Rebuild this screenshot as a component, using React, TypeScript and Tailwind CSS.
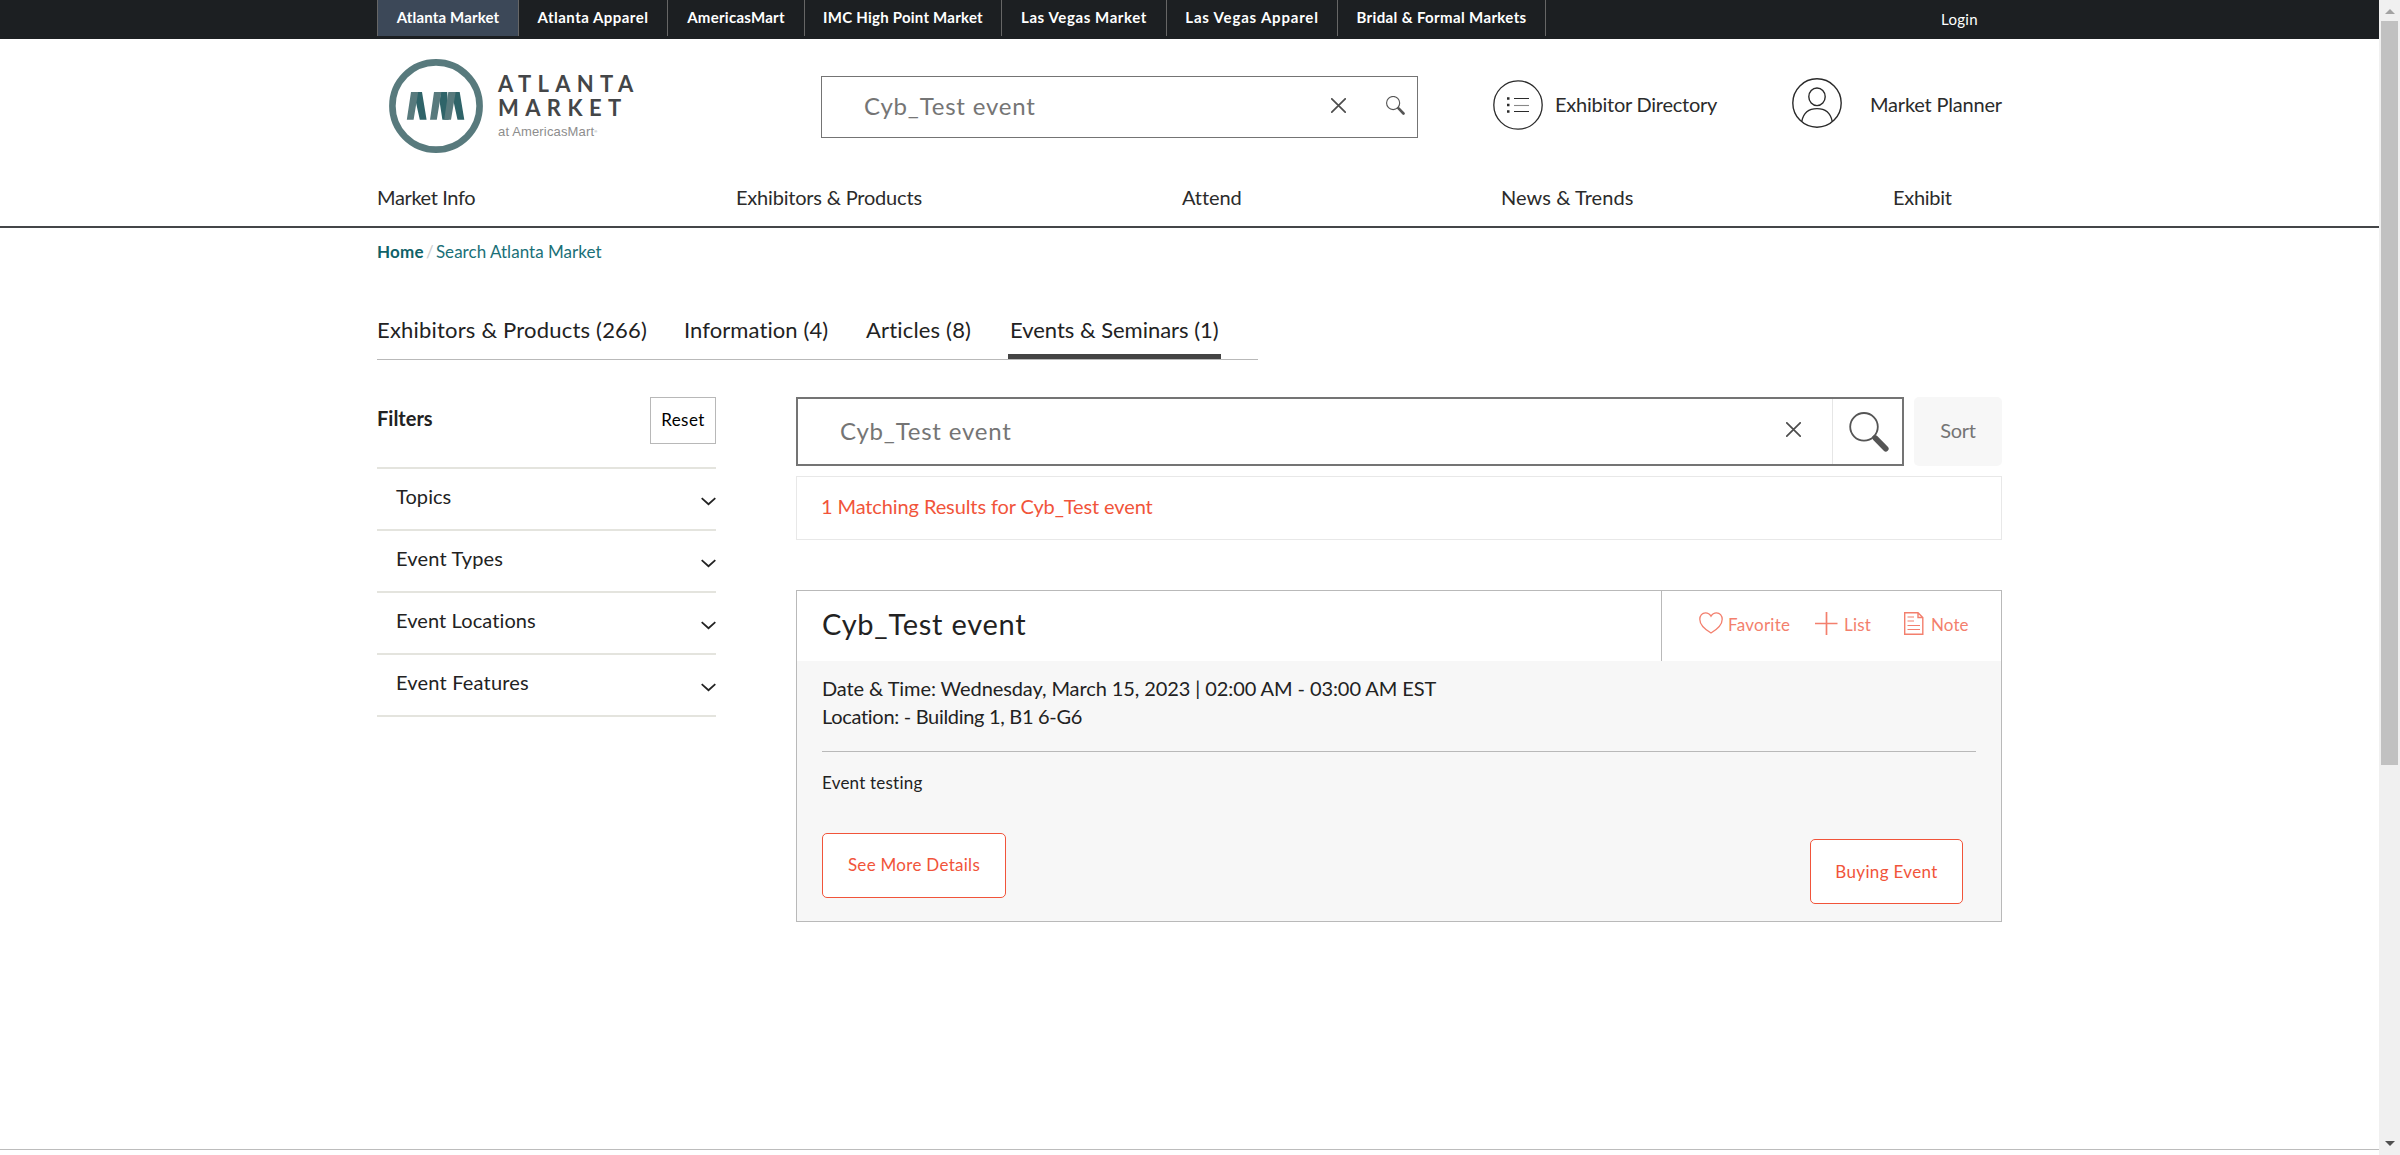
import type { ReactNode } from "react";

const markets = [
  { name: "Atlanta Market", cls: "w-[142px] tracking-[0.16px] bg-[#3c4858] border-l" },
  { name: "Atlanta Apparel", cls: "w-[149px] tracking-[0.47px]" },
  { name: "AmericasMart", cls: "w-[137px] tracking-[0.27px]" },
  { name: "IMC High Point Market", cls: "w-[197px] tracking-[0.24px]" },
  { name: "Las Vegas Market", cls: "w-[165px] tracking-[0.6px]" },
  { name: "Las Vegas Apparel", cls: "w-[171px] tracking-[0.8px]" },
  { name: "Bridal & Formal Markets", cls: "w-[208px] tracking-[0.37px]" },
];

const navItems = [
  { name: "Market Info", cls: "w-[359px] tracking-[-0.37px]" },
  { name: "Exhibitors & Products", cls: "w-[446px] tracking-[-0.2px]" },
  { name: "Attend", cls: "w-[319px] tracking-[-0.09px]" },
  { name: "News & Trends", cls: "w-[392px] tracking-[0.06px]" },
  { name: "Exhibit", cls: "tracking-[-0.28px]" },
];

const filters = [
  { name: "Topics", cls: "tracking-[0.07px]" },
  { name: "Event Types", cls: "tracking-[0.18px]" },
  { name: "Event Locations", cls: "tracking-[0.1px]" },
  { name: "Event Features", cls: "tracking-[0.19px]" },
];

function Close() {
  return (
    <svg width="15" height="15" viewBox="0 0 15 15" stroke="#4d4d4d" strokeWidth="1.7" strokeLinecap="round">
      <path d="M0.8 0.8 14.2 14.2M14.2 0.8 0.8 14.2" />
    </svg>
  );
}

function Magnifier({ size, ring }: { size: number; ring: number }) {
  return (
    <svg width={size} height={size} viewBox="0 0 40 40" fill="none">
      <circle cx="15" cy="14.8" r="13.8" stroke="#555" strokeWidth={ring} />
      <path d="M26.5 26.2 36.8 36.8" stroke="#555" strokeWidth="5.6" strokeLinecap="round" />
      <path d="M24 24 28 28" stroke="#555" strokeWidth="3" />
    </svg>
  );
}

function LogoMark() {
  return (
    <svg width="94" height="94" viewBox="0 0 94 94" className="shrink-0">
      <circle cx="47" cy="47" r="43.6" fill="none" stroke="#587a7d" strokeWidth="6.6" />
      <path fill="#2f6469" d="M27.5 33H33l4.6 27.7h-6.8L26.2 40zM52 33h6.2l1.5 27.7h-6.3L50.5 42zM65.5 33h5.2l4.6 27.7h-6.8L64 40z" />
      <path fill="#587a7d" d="M22 33h7.2l-4.6 27.7h-6.8zM45 33h7.4l-4.6 27.7H41zM59.3 33h7.4L62 60.7h-6.8z" />
    </svg>
  );
}

function Header() {
  return (
    <header>
      <div className="flex h-[39px] bg-[#1c1f22] pl-[377px] text-[15px] text-white">
        <div className="flex h-9">
          {markets.map((m) => (
            <div key={m.name} className={`flex items-center justify-center border-r border-[#666] pb-[2px] font-bold ${m.cls}`}>
              {m.name}
            </div>
          ))}
        </div>
        <div className="ml-[395px] flex h-[38px] items-center tracking-[0.3px]">Login</div>
      </div>
      <div className="border-b-2 border-[#444648] pl-[377px]">
        <div className="flex h-[134px] items-center text-[20px] text-[#2b2b2b]">
          <div className="ml-3 flex w-[432px] items-center">
            <LogoMark />
            <div className="ml-[15px] flex flex-col text-[#444648]">
              <div className="text-[22px] leading-[24px] font-bold tracking-[6.3px]">ATLANTA</div>
              <div className="text-[22px] leading-[24px] font-bold tracking-[6.4px]">MARKET</div>
              <div className="mt-[3px] font-['Liberation_Sans'] text-[13px] leading-[17px] tracking-[0.15px] text-[#8d8d8d]">
                at AmericasMart<span className="align-top text-[4px]">®</span>
              </div>
            </div>
          </div>
          <div className="mt-[2px] flex h-[62px] w-[597px] items-center border border-[#747474] pb-[4px] pl-[42px] text-[#757575]">
            <div className="grow pt-[2px] text-[24px] tracking-[0.8px]">Cyb_Test event</div>
            <Close />
            <div className="ml-10 mr-3 pt-[1px]">
              <Magnifier size={19} ring={2.4} />
            </div>
          </div>
          <div className="ml-[75px] flex w-[299px] items-center gap-[12px]">
            <svg width="50" height="50" viewBox="0 0 50 50" fill="none" stroke="#2b2b2b" className="-mt-[2px]">
              <circle cx="25" cy="25" r="24.2" strokeWidth="1.3" />
              <path d="M21 18.5h15M21 31.5h15" strokeWidth="1.1" />
              <path d="M21 25.5h15" stroke="#888" strokeWidth="1.1" />
              <path d="M14 18.5h2.5M14 25h2.5M14 31.5h2.5" strokeWidth="2.6" />
            </svg>
            <span className="-mt-[4px] tracking-[-0.24px]">Exhibitor Directory</span>
          </div>
          <div className="flex items-center gap-[28px]">
            <svg width="50" height="50" viewBox="0 0 50 50" fill="none" stroke="#2b2b2b" strokeWidth="1.4" className="-mt-[6px]">
              <circle cx="25" cy="25" r="24.2" />
              <ellipse cx="25" cy="18.8" rx="8.2" ry="8.8" />
              <path d="M9.8 43.3C11.5 34.5 17.5 30.6 25 30.6S38.5 34.5 40.2 43.3" />
            </svg>
            <span className="-mt-[4px] tracking-[-0.2px]">Market Planner</span>
          </div>
        </div>
        <nav className="flex h-[53px] items-center pb-[6px] text-[20px] text-[#2b2b2b]">
          {navItems.map((n) => (
            <div key={n.name} className={n.cls}>
              {n.name}
            </div>
          ))}
        </nav>
      </div>
    </header>
  );
}

function Sidebar() {
  return (
    <aside className="w-[339px]">
      <div className="mb-[23px] flex h-[47px] items-center justify-between">
        <div className="pb-[5px] text-[20px] font-bold">Filters</div>
        <div className="flex h-[47px] w-[66px] items-center justify-center border border-[#b8b8b8] pb-[1px] text-[17px] tracking-[0.45px] text-black">
          Reset
        </div>
      </div>
      <div className="border-b-2 border-[#e4e4de]">
        {filters.map((f) => (
          <div key={f.name} className="flex h-[62px] items-center justify-between border-t-2 border-[#e4e4de] pl-[19px] text-[20px]">
            <span className={`pb-[6px] ${f.cls}`}>{f.name}</span>
            <svg width="15" height="9" viewBox="0 0 15 9" fill="none" stroke="#222" strokeWidth="1.8" className="mt-[5px]">
              <path d="M0.7 1.2 7.5 7.2 14.3 1.2" />
            </svg>
          </div>
        ))}
      </div>
    </aside>
  );
}

function Action({ icon, children }: { icon: ReactNode; children: ReactNode }) {
  return (
    <div className="flex items-center gap-[5px]">
      {icon}
      {children}
    </div>
  );
}

function EventCard() {
  return (
    <article className="mt-[50px] h-[332px] border border-[#b9b9b9]">
      <div className="flex h-[70px]">
        <h2 className="flex grow items-center pb-[4px] pl-[25px] text-[29px] tracking-[0.75px]">Cyb_Test event</h2>
        <div className="flex w-[340px] items-center border-l border-[#b9b9b9] pb-[6px] pl-[37px] text-[17px] text-[#f37f6d]">
          <div className="w-[116px]">
            <Action
              icon={
                <svg width="24" height="22" viewBox="0 0 24 22" fill="none" stroke="#f37f6d" strokeWidth="1.3">
                  <path d="M12 4.2C10.5 1.500 8.300 0.800 6.500 0.800 3.200 0.800 0.800 3.500 0.800 7.300 0.800 13 6 17.500 12 21 18 17.500 23.200 13 23.200 7.300 23.200 3.500 20.800 0.800 17.500 0.800 15.700 0.800 13.500 1.500 12 4.200Z" />
                </svg>
              }
            >
              <span className="pt-[3px] tracking-[0.26px]">Favorite</span>
            </Action>
          </div>
          <div className="w-[89px]">
            <Action
              icon={
                <svg width="23" height="23" viewBox="0 0 23 23" stroke="#f37f6d" strokeWidth="1.7">
                  <path d="M0 11.5H22.5M11.5 0V23" />
                </svg>
              }
            >
              <span className="pl-[1px] pt-[3px] tracking-[0.18px]">List</span>
            </Action>
          </div>
          <Action
            icon={
              <svg width="20" height="23" viewBox="0 0 20 23" fill="none" stroke="#f37f6d" strokeWidth="1.4">
                <path d="M0.7 0.7H14L18.8 5.500V22.300H0.700ZM14 0.700V5.500H18.800" />
                <path d="M3.500 5H10M3.500 9H10M3.500 13.500H16M3.500 17.500H16" strokeWidth="1.1" />
              </svg>
            }
          >
            <span className="pl-[2px] pt-[3px] tracking-[0.12px]">Note</span>
          </Action>
        </div>
      </div>
      <div className="h-[260px] bg-[#f7f7f7] px-[25px] pt-[13px]">
        <p className="text-[20px] leading-7 tracking-[-0.09px]">
          Date &amp; Time: Wednesday, March 15, 2023 | 02:00 AM - 03:00 AM EST
        </p>
        <p className="text-[20px] leading-7 tracking-[-0.31px]">Location: - Building 1, B1 6-G6</p>
        <hr className="mt-[21px] border-[#b9b9b9]" />
        <p className="mt-[17px] text-[17px] leading-7 tracking-[0.22px]">Event testing</p>
        <div className="mt-[36px] flex items-start justify-between pr-[13px] text-[17px] text-[#f1543a]">
          <button className="h-[65px] w-[184px] rounded-[5px] border border-[#f1543a] bg-white pb-[2px] tracking-[0.29px]">
            See More Details
          </button>
          <button className="mt-[6px] h-[65px] w-[153px] rounded-[5px] border border-[#f1543a] bg-white tracking-[0.35px]">
            Buying Event
          </button>
        </div>
      </div>
    </article>
  );
}

function Results() {
  return (
    <section className="w-[1206px]">
      <div className="flex gap-[10px]">
        <div className="flex h-[69px] w-[1108px] items-stretch border-2 border-[#747474]">
          <div className="flex grow items-center pb-[1px] pl-[42px] text-[24px] tracking-[0.8px] text-[#757575]">Cyb_Test event</div>
          <div className="flex w-[46px] items-center pb-[4px]">
            <Close />
          </div>
          <div className="flex w-[70px] items-center border-l border-[#e6e6e6] pl-4">
            <Magnifier size={40} ring={1.8} />
          </div>
        </div>
        <div className="flex w-[88px] items-center justify-center rounded-[5px] bg-[#f7f7f7] pb-[4px] text-[20px] tracking-[-0.3px] text-[#757575]">
          Sort
        </div>
      </div>
      <div className="mt-[10px] flex h-[64px] items-center border border-[#e8e8e8] pb-[4px] pl-[24px] text-[20px] tracking-[-0.11px] text-[#f1543a]">
        1 Matching Results for Cyb_Test event
      </div>
      <EventCard />
    </section>
  );
}

function Scrollbar() {
  return (
    <div className="flex w-[21px] flex-col items-center justify-between bg-[#f0f0f0]">
      <div className="flex w-full flex-col items-center">
        <svg width="10" height="5" viewBox="0 0 10 5" className="mt-[9px] mb-[7px]">
          <path d="M5 0 10 5H0Z" fill="#a3a3a3" />
        </svg>
        <div className="h-[744px] w-[17px] bg-[#c1c1c1]" />
      </div>
      <svg width="10" height="5" viewBox="0 0 10 5" className="mb-[9px]">
        <path d="M0 0H10L5 5Z" fill="#505050" />
      </svg>
    </div>
  );
}

export default function App() {
  return (
    <div className="flex h-[1155px] w-[2400px] bg-white font-['Lato',sans-serif] text-[#222]">
      <div className="flex w-[2379px] flex-col whitespace-nowrap">
        <Header />
        <main className="pl-[377px]">
          <div className="flex h-[47px] items-center pt-[1px] text-[17px] text-[#1a7077]">
            <span className="font-bold tracking-[0.25px] text-[#0f6268]">Home</span>
            <span className="w-[12px] text-center text-[#ccc]">/</span>
            <span className="tracking-[0.03px]">Search Atlanta Market</span>
          </div>
          <div className="mt-[25px] flex h-[60px] w-[881px] border-b border-[#b9b9b9] text-[22px]">
            <div className="flex w-[307px] items-center tracking-[0.2px]">Exhibitors &amp; Products (266)</div>
            <div className="flex w-[182px] items-center tracking-[0.09px]">Information (4)</div>
            <div className="flex w-[142px] items-center tracking-[0.18px]">Articles (8)</div>
            <div className="flex w-[213px] items-center border-b-[5px] border-[#444] pt-[5px] pl-[2px] tracking-[-0.02px]">
              Events &amp; Seminars (1)
            </div>
          </div>
          <div className="mt-[37px] flex gap-20">
            <Sidebar />
            <Results />
          </div>
        </main>
        <div className="mt-auto h-[6px] border-t border-[#bcbcbc]" />
      </div>
      <Scrollbar />
    </div>
  );
}
